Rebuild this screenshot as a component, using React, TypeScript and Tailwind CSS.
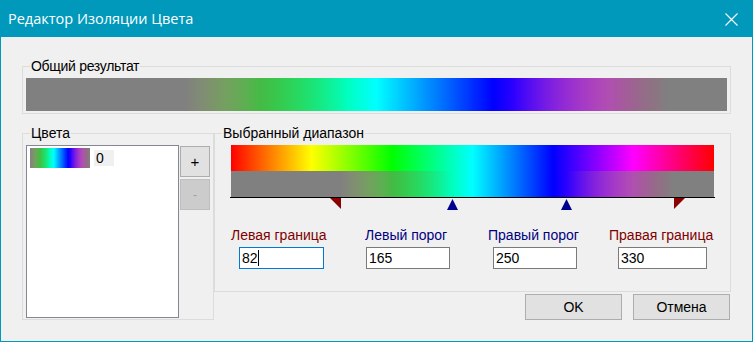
import React from "react";

const GRAY = [128, 128, 128];
const LB = 82, LT = 165, RT = 250, RB = 330;

function hueRGB(h: number): number[] {
  const hh = ((h % 360) + 360) % 360;
  const f = (n: number) => {
    const k = (n + hh / 60) % 6;
    return 255 * (1 - Math.max(0, Math.min(k, 4 - k, 1)));
  };
  return [f(5), f(3), f(1)];
}

function weight(h: number): number {
  if (h <= LB) return 0;
  if (h < LT) return (h - LB) / (LT - LB);
  if (h <= RT) return 1;
  if (h < RB) return (RB - h) / (RB - RT);
  return 0;
}

function masked(h: number): number[] {
  const c = hueRGB(h);
  const w = weight(h);
  return c.map((v, i) => Math.round(GRAY[i] * (1 - w) + v * w));
}

function rgb(c: number[]) {
  return `rgb(${Math.round(c[0])},${Math.round(c[1])},${Math.round(c[2])})`;
}

function gradient(a: number, b: number, fn: (h: number) => number[], step = 2) {
  const hs: number[] = [];
  for (let h = a; h < b; h += step) hs.push(h);
  hs.push(b);
  [LB, LT, RT, RB].forEach((x) => {
    if (x > a && x < b) hs.push(x);
  });
  hs.sort((x, y) => x - y);
  const stops = hs.map((h) => `${rgb(fn(h))} ${(((h - a) / (b - a)) * 100).toFixed(3)}%`);
  return `linear-gradient(to right, ${stops.join(", ")})`;
}

const hueGrad = gradient(0, 360, hueRGB, 60);
const maskGrad = gradient(0, 360, masked, 2);
const swatchGrad = gradient(LB, RB, masked, 4);

const BAR_W = 483;
const pos = (h: number) => (h / 360) * BAR_W;

function Field({ value, focused, w }: { value: string; focused?: boolean; w: number }) {
  return (
    <div
      className={`h-[22px] bg-white border flex items-center pl-[2px] text-[14px] leading-[16px] text-black ${
        focused ? "border-[#0078d7]" : "border-[#7a7a7a]"
      }`}
      style={{ width: w }}
    >
      <span>{value}</span>
      {focused && <span className="w-px h-[16px] bg-black" />}
    </div>
  );
}

export default function App() {
  return (
    <div className="w-[753px] h-[342px] flex flex-col font-['Liberation_Sans',Arial,sans-serif] text-[14px] leading-[15px] text-black select-none">
      <div className="h-[37px] shrink-0 bg-[#0099bc] flex items-center justify-between pl-[8px] pr-[15px]">
        <span className="text-white text-[14.5px] leading-[18px] font-['Open_Sans',sans-serif]">
          Редактор Изоляции Цвета
        </span>
        <svg width="13" height="13" viewBox="0 0 13 13" className="mt-px">
          <path d="M0.5 0.5 L12.5 12.5 M12.5 0.5 L0.5 12.5" stroke="white" strokeWidth="1.1" />
        </svg>
      </div>
      <div className="flex-1 bg-[#f0f0f0] border-x border-b border-[#0099bc] pl-[21px] pt-[22px]">
        <fieldset className="w-[709px] border border-[#dcdcdc] px-[3px] pt-[4px] pb-[2px]">
          <legend className="ml-[4px] px-[1px] text-[14px] leading-[15px] tracking-[-0.3px]">Общий результат</legend>
          <div className="h-[33px] w-full" style={{ background: maskGrad }} />
        </fieldset>

        <div className="flex items-start mt-[12px]">
          <fieldset className="w-[192px] h-[194px] border border-[#dcdcdc] px-[3px] pt-[4px]">
            <legend className="ml-[4px] px-[1px] text-[14px] leading-[15px]">Цвета</legend>
            <div className="flex gap-[1px]">
              <div className="w-[153px] h-[173px] border border-[#828790] bg-white pl-[3px] pt-[2px]">
                <div className="flex items-start">
                  <div className="w-[60px] h-[20px]" style={{ background: swatchGrad }} />
                  <div className="ml-[4px] mt-[2px] w-[20px] h-[16px] bg-[#f0f0f0] pl-[2px] text-[14px] leading-[16px]">
                    0
                  </div>
                </div>
              </div>
              <div className="flex flex-col gap-[2px] mt-[1px]">
                <button className="w-[30px] h-[31px] bg-[#e1e1e1] border border-[#adadad] flex items-center justify-center text-[15px] leading-none text-black">
                  +
                </button>
                <button className="w-[30px] h-[31px] bg-[#cccccc] border border-[#bfbfbf] flex items-center justify-center text-[12px] leading-none text-[#a0a0a0]">
                  -
                </button>
              </div>
            </div>
          </fieldset>

          <div className="flex flex-col">
            <fieldset className="w-[517px] h-[166px] border border-[#dcdcdc] px-[7px] pt-[4px]">
              <legend className="px-[1px] text-[14px] leading-[15px]">Выбранный диапазон</legend>
              <div className="pl-[9px]">
                <div className="w-[483px]">
                  <div className="h-[26px]" style={{ background: hueGrad }} />
                  <div className="h-[26px]" style={{ background: maskGrad }} />
                </div>
                <div className="w-[485px] -ml-px h-px bg-black" />
                <div className="relative w-[483px] h-[12px]">
                  <svg width="11" height="11" viewBox="0 0 11 11" className="absolute top-0" style={{ left: pos(LB) - 11 }}>
                    <polygon points="0,0 11,0 11,11" fill="#8b0000" />
                  </svg>
                  <svg width="11" height="11" viewBox="0 0 11 11" className="absolute top-px" style={{ left: pos(LT) - 5.5 }}>
                    <polygon points="5.5,0 11,11 0,11" fill="#000090" />
                  </svg>
                  <svg width="11" height="11" viewBox="0 0 11 11" className="absolute top-px" style={{ left: pos(RT) - 5.5 }}>
                    <polygon points="5.5,0 11,11 0,11" fill="#000090" />
                  </svg>
                  <svg width="11" height="11" viewBox="0 0 11 11" className="absolute top-0" style={{ left: pos(RB) }}>
                    <polygon points="0,0 11,0 0,11" fill="#8b0000" />
                  </svg>
                </div>
                <div className="flex mt-[18px]">
                  <div className="w-[134px] flex flex-col">
                    <span className="text-[#800000]">Левая граница</span>
                    <div className="ml-[8px] mt-[4px]">
                      <Field value="82" focused w={85} />
                    </div>
                  </div>
                  <div className="w-[123px] flex flex-col">
                    <span className="text-[#000080]">Левый порог</span>
                    <div className="ml-[1px] mt-[4px]">
                      <Field value="165" w={84} />
                    </div>
                  </div>
                  <div className="w-[121px] flex flex-col">
                    <span className="text-[#000080]">Правый порог</span>
                    <div className="ml-[5px] mt-[4px]">
                      <Field value="250" w={84} />
                    </div>
                  </div>
                  <div className="flex flex-col">
                    <span className="text-[#800000]">Правая граница</span>
                    <div className="ml-[9px] mt-[4px]">
                      <Field value="330" w={89} />
                    </div>
                  </div>
                </div>
              </div>
            </fieldset>
            <div className="flex justify-end gap-[11px] mt-[2px] pr-[1px]">
              <button className="w-[97px] h-[26px] bg-[#e1e1e1] border border-[#adadad] text-[14px] text-black">OK</button>
              <button className="w-[97px] h-[26px] bg-[#e1e1e1] border border-[#adadad] text-[14px] text-black">Отмена</button>
            </div>
          </div>
        </div>
      </div>
    </div>
  );
}
